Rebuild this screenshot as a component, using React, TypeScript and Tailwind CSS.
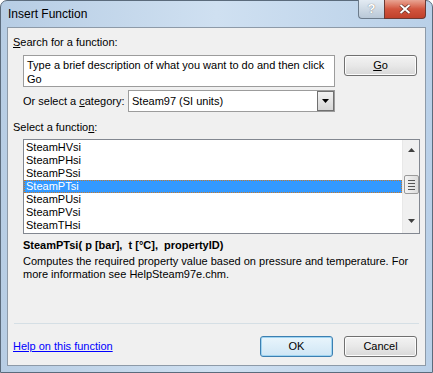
import React from 'react';

const font = { fontFamily: '"Liberation Sans", Arial, sans-serif' };

const funcs = ['SteamHVsi', 'SteamPHsi', 'SteamPSsi', 'SteamPTsi', 'SteamPUsi', 'SteamPVsi', 'SteamTHsi'];

const Btn: React.FC<{ children: React.ReactNode; def?: boolean }> = ({ children, def }) => (
  <button
    className={`w-[73px] h-[21px] rounded-[3px] border text-[11px] text-black flex items-center justify-center ${
      def
        ? 'border-[#3c7fb1] bg-gradient-to-b from-[#e9f5fc] to-[#cfe6f5] shadow-[inset_0_0_0_1px_#9fd4f1]'
        : 'border-[#707070] bg-gradient-to-b from-[#f3f3f3] via-[#e8e8e8] to-[#d8d8d8] shadow-[inset_0_0_0_1px_#fcfcfc]'
    }`}
  >
    {children}
  </button>
);

export default function App() {
  return (
    <div className="w-[433px] h-[373px] bg-white" style={font}>
      <div className="w-[433px] h-[373px] rounded-t-[7px] border border-[#5b6b7c] bg-gradient-to-r from-[#b7cde4] via-[#cfe0f1] to-[#b9d0e8] flex flex-col">
        {/* title bar */}
        <div className="h-[26px] flex items-start relative">
          <span className="ml-[7px] mt-[4px] text-[12px] text-black">Insert Function</span>
          <div className="absolute right-[6px] top-[-1px] flex">
            <div className="w-[26px] h-[19px] rounded-bl-[4px] border border-[#6c7b8b] border-t-0 border-r-0 bg-gradient-to-b from-[#e3ebf3] to-[#b9c8d7] flex items-center justify-center text-[13px] text-white font-bold [text-shadow:0_0_1px_#555]">
              ?
            </div>
            <div className="w-[42px] h-[19px] rounded-br-[4px] border border-[#6c3a33] border-t-0 bg-gradient-to-b from-[#e8a493] via-[#d2553e] to-[#c0412b] flex items-center justify-center">
              <svg width="12" height="10" viewBox="0 0 12 10">
                <path d="M1.5 1 L10.5 9 M10.5 1 L1.5 9" stroke="#5a2a22" strokeWidth="3.2" />
                <path d="M1.5 1 L10.5 9 M10.5 1 L1.5 9" stroke="#fff" strokeWidth="2" />
              </svg>
            </div>
          </div>
        </div>
        {/* client */}
        <div className="mx-[6px] mb-[6px] flex-1 bg-[#f0f0f0] border border-[#8d9aa8] flex flex-col text-[11px] text-black">
          <div className="ml-[5px] mt-[6px] h-[16px] leading-[16px]">
            <span className="underline">S</span>earch for a function:
          </div>
          <div className="flex mt-[5px] ml-[15px]">
            <div className="w-[312px] h-[32px] bg-white border border-[#9c9c9c] px-[3px] pt-[2px] leading-[14px]">
              Type a brief description of what you want to do and then click Go
            </div>
            <div className="ml-[9px]">
              <Btn>
                <span className="underline">G</span>o
              </Btn>
            </div>
          </div>
          <div className="flex items-center mt-[3px] ml-[15px]">
            <span className="w-[105px]">
              Or select a <span className="underline">c</span>ategory:
            </span>
            <div className="w-[207px] h-[22px] bg-white border border-[#9c9c9c] flex items-center">
              <span className="flex-1 pl-[3px]">Steam97 (SI units)</span>
              <div className="w-[17px] h-[20px] border border-[#707070] bg-gradient-to-b from-[#f2f2f2] to-[#d6d6d6] flex items-center justify-center">
                <svg width="7" height="4" viewBox="0 0 7 4">
                  <path d="M0 0 H7 L3.5 4 Z" fill="#000" />
                </svg>
              </div>
            </div>
          </div>
          <div className="ml-[5px] mt-[7px] h-[16px] leading-[16px]">
            Select a functio<span className="underline">n</span>:
          </div>
          <div className="ml-[15px] mt-[4px] w-[397px] h-[95px] bg-white border border-[#828790] flex">
            <div className="flex-1 pt-[1px]">
              {funcs.map((f) => (
                <div
                  key={f}
                  className={`h-[13px] leading-[13px] pl-[2px] ${
                    f === 'SteamPTsi' ? 'bg-[#3399ff] text-white outline-1 outline-dotted outline-[#c87a2a] -outline-offset-1' : ''
                  }`}
                >
                  {f}
                </div>
              ))}
            </div>
            <div className="w-[17px] bg-[#f0f0f0] border-l border-[#e8e8e8] flex flex-col items-center">
              <svg className="mt-[8px]" width="7" height="4" viewBox="0 0 7 4">
                <path d="M3.5 0 L7 4 H0 Z" fill="#404040" />
              </svg>
              <div className="mt-[23px] w-[15px] h-[19px] rounded-[2px] border border-[#9a9a9a] bg-gradient-to-r from-[#f4f4f4] to-[#dcdcdc] flex flex-col items-center justify-center gap-[2px]">
                <div className="w-[7px] h-[1px] bg-[#555]" />
                <div className="w-[7px] h-[1px] bg-[#555]" />
                <div className="w-[7px] h-[1px] bg-[#555]" />
                <div className="w-[7px] h-[1px] bg-[#555]" />
              </div>
              <svg className="mt-[25px]" width="7" height="4" viewBox="0 0 7 4">
                <path d="M0 0 H7 L3.5 4 Z" fill="#404040" />
              </svg>
            </div>
          </div>
          <div className="ml-[15px] mt-[3px] font-bold h-[16px] leading-[16px]">
            SteamPTsi( p [bar],&nbsp; t [°C],&nbsp; propertyID)
          </div>
          <div className="ml-[15px] mt-[2px] w-[395px] leading-[13px]">
            Computes the required property value based on pressure and temperature. For more information see HelpSteam97e.chm.
          </div>
          <div className="flex-1" />
          <div className="mx-[6px] h-[1px] bg-[#d5dfe5]" />
          <div className="flex items-center mt-[12px] mb-[8px] ml-[5px]">
            <span className="text-[#0000ff] underline flex-1">Help on this function</span>
            <Btn def>OK</Btn>
            <div className="ml-[11px] mr-[8px]">
              <Btn>Cancel</Btn>
            </div>
          </div>
        </div>
      </div>
    </div>
  );
}
